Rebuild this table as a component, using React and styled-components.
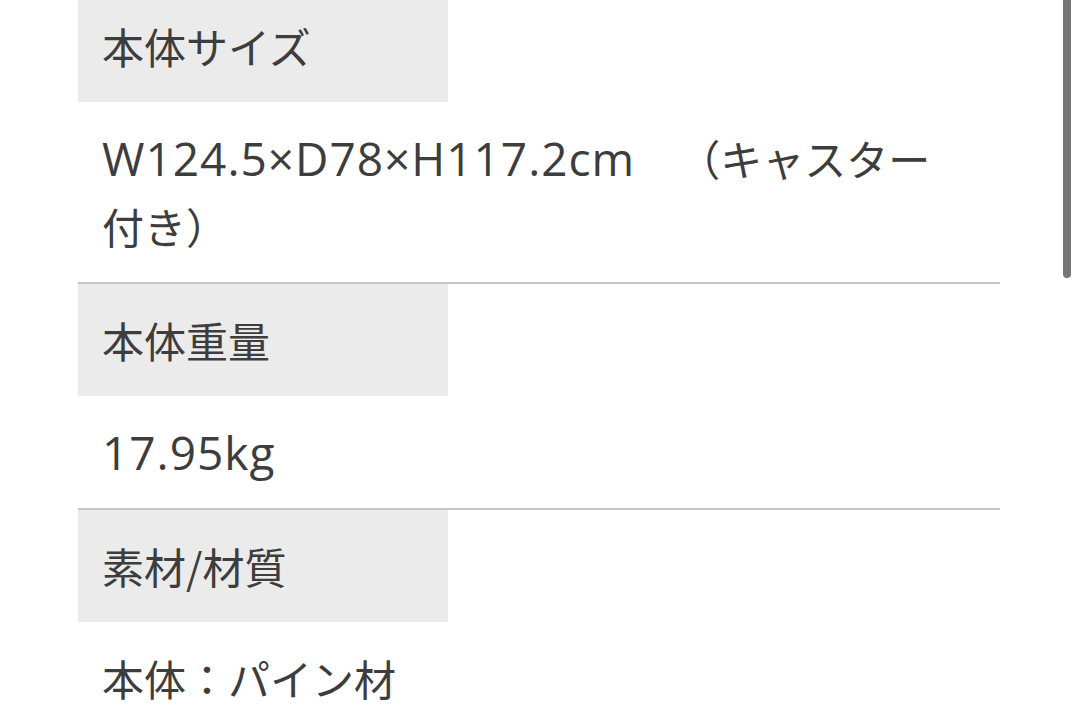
import React from "react";
import styled, { createGlobalStyle } from "styled-components";

const Global = createGlobalStyle`
  html, body { margin: 0; padding: 0; background: #ffffff; }
  body {
    overflow: hidden;
    font-family: "Noto Sans CJK JP", "Noto Sans", sans-serif;
    color: #3d3d3d;
  }
`;

const Screen = styled.div`
  position: relative;
  width: 1080px;
  height: 725px;
  overflow: hidden;
  background: #ffffff;
`;

const SpecList = styled.dl`
  margin: -10px 0 0 78px;
  width: 922px;
  display: flex;
  flex-direction: column;
`;

const Item = styled.div`
  display: flex;
  flex-direction: column;
  border-bottom: 2px solid #c6c6c6;
`;

const Label = styled.dt`
  width: 370px;
  height: 112px;
  box-sizing: border-box;
  padding: 0 24px;
  display: flex;
  align-items: center;
  background: #ebebeb;
  font-size: 42px;
  line-height: 1;
  font-weight: 400;
`;

const Value = styled.dd`
  margin: 0;
  padding: 22px 60px 22px 24px;
  font-size: 42px;
  line-height: 68px;
  font-weight: 400;
`;

const Latin = styled.span`
  font-family: "Open Sans", "Noto Sans", sans-serif;
  font-size: 46px;
  line-height: 68px;
  letter-spacing: 1px;
  margin-right: ${(p) => p.$gap || 0}px;
`;

const Line = styled.div``;

const ScrollIndicator = styled.div`
  position: absolute;
  top: -6px;
  right: 9px;
  width: 8px;
  height: 284px;
  border-radius: 4px;
  background: #757575;
`;

export default function App() {
  return (
    <Screen>
      <Global />
      <SpecList>
        <Item>
          <Label>本体サイズ</Label>
          <Value>
            <Latin $gap={22}>W124.5×D78×H117.2cm</Latin>　（キャスター付き）
          </Value>
        </Item>
        <Item>
          <Label>本体重量</Label>
          <Value>
            <Latin>17.95kg</Latin>
          </Value>
        </Item>
        <Item>
          <Label>素材/材質</Label>
          <Value>
            <Line>本体：パイン材</Line>
            <Line>キャスター：スチール</Line>
          </Value>
        </Item>
      </SpecList>
      <ScrollIndicator />
    </Screen>
  );
}
